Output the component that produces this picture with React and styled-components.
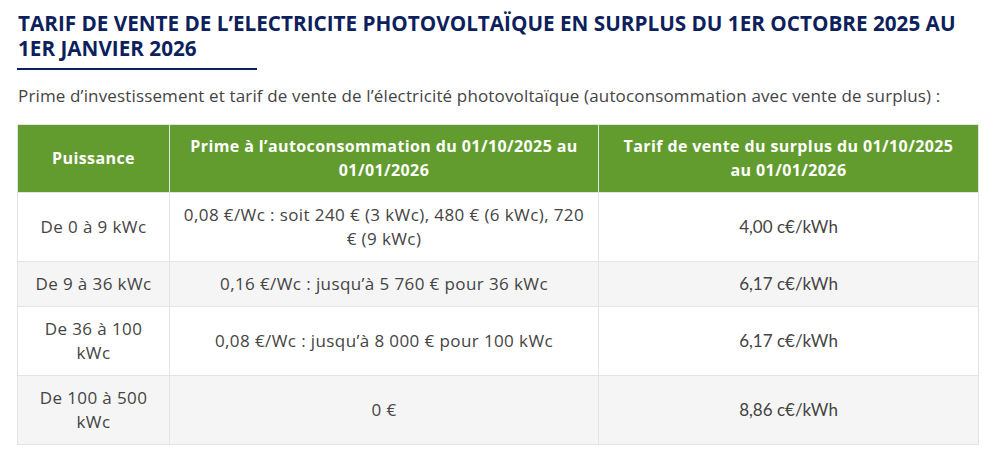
import React from 'react';
import styled, { createGlobalStyle } from 'styled-components';

const GlobalStyle = createGlobalStyle`
  html, body {
    margin: 0;
    padding: 0;
    background: #ffffff;
  }
  body {
    font-family: "Open Sans", "Noto Sans", sans-serif;
  }
`;

const rows = [
  {
    power: 'De 0 à 9 kWc',
    prime: '0,08 €/Wc : soit 240 € (3 kWc), 480 € (6 kWc), 720 € (9 kWc)',
    tarif: '4,00 c€/kWh',
  },
  {
    power: 'De 9 à 36 kWc',
    prime: '0,16 €/Wc : jusqu’à 5 760 € pour 36 kWc',
    tarif: '6,17 c€/kWh',
  },
  {
    power: 'De 36 à 100 kWc',
    prime: '0,08 €/Wc : jusqu’à 8 000 € pour 100 kWc',
    tarif: '6,17 c€/kWh',
  },
  {
    power: 'De 100 à 500 kWc',
    prime: '0 €',
    tarif: '8,86 c€/kWh',
  },
];

export default function App() {
  return (
    <Page>
      <GlobalStyle />
      <Title>
        TARIF DE VENTE DE L’ELECTRICITE PHOTOVOLTAÏQUE EN SURPLUS DU 1ER OCTOBRE 2025 AU 1ER JANVIER 2026
      </Title>
      <Rule />
      <Intro>
        Prime d’investissement et tarif de vente de l’électricité photovoltaïque (autoconsommation avec vente de surplus) :
      </Intro>
      <Table>
        <colgroup>
          <col style={{ width: 152 }} />
          <col style={{ width: 429 }} />
          <col style={{ width: 380 }} />
        </colgroup>
        <thead>
          <tr>
            <Th>Puissance</Th>
            <Th>Prime à l’autoconsommation du 01/10/2025 au 01/01/2026</Th>
            <Th>Tarif de vente du surplus du 01/10/2025 au 01/01/2026</Th>
          </tr>
        </thead>
        <tbody>
          {rows.map((r, i) => (
            <Row key={i} $odd={i % 2 === 1}>
              <Td>{r.power}</Td>
              <Td>{r.prime}</Td>
              <Td $lato>{r.tarif}</Td>
            </Row>
          ))}
        </tbody>
      </Table>
    </Page>
  );
}

const Page = styled.div`
  padding: 11px 17px 0 17px;
  width: 961px;
`;

const Title = styled.h2`
  margin: 0;
  padding-left: 1px;
  font-family: "Open Sans", "Noto Sans", sans-serif;
  font-weight: 700;
  font-size: 20.7px;
  line-height: 25px;
  color: #0d1f5c;
  letter-spacing: 0;
`;

const Rule = styled.div`
  width: 240px;
  height: 2px;
  background: #0d1f5c;
  margin-top: 7px;
`;

const Intro = styled.p`
  margin: 14px 0 16px 1px;
  font-size: 17px;
  line-height: 24px;
  letter-spacing: 0.15px;
  color: #444444;
`;

const Table = styled.table`
  width: 961px;
  border-collapse: collapse;
  table-layout: fixed;
  border: 1px solid #e4e4e4;
`;

const Th = styled.th`
  background: #629c2e;
  color: #ffffff;
  font-weight: 700;
  font-size: 16px;
  line-height: 24px;
  letter-spacing: 0.4px;
  padding: 9px 12px 10px;
  text-align: center;
  vertical-align: middle;
  border: 1px solid #e4e4e4;
  border-top: none;
`;

const Row = styled.tr`
  background: ${(p) => (p.$odd ? '#f5f5f5' : '#ffffff')};
`;

const Td = styled.td`
  border: 1px solid #e4e4e4;
  padding: 10px 12px;
  text-align: center;
  vertical-align: middle;
  font-size: 17px;
  line-height: 24px;
  letter-spacing: ${(p) => (p.$lato ? '0' : '0.4px')};
  color: #444444;
  font-family: ${(p) => (p.$lato ? 'Lato, "Open Sans", sans-serif' : '"Open Sans", "Noto Sans", sans-serif')};
`;
